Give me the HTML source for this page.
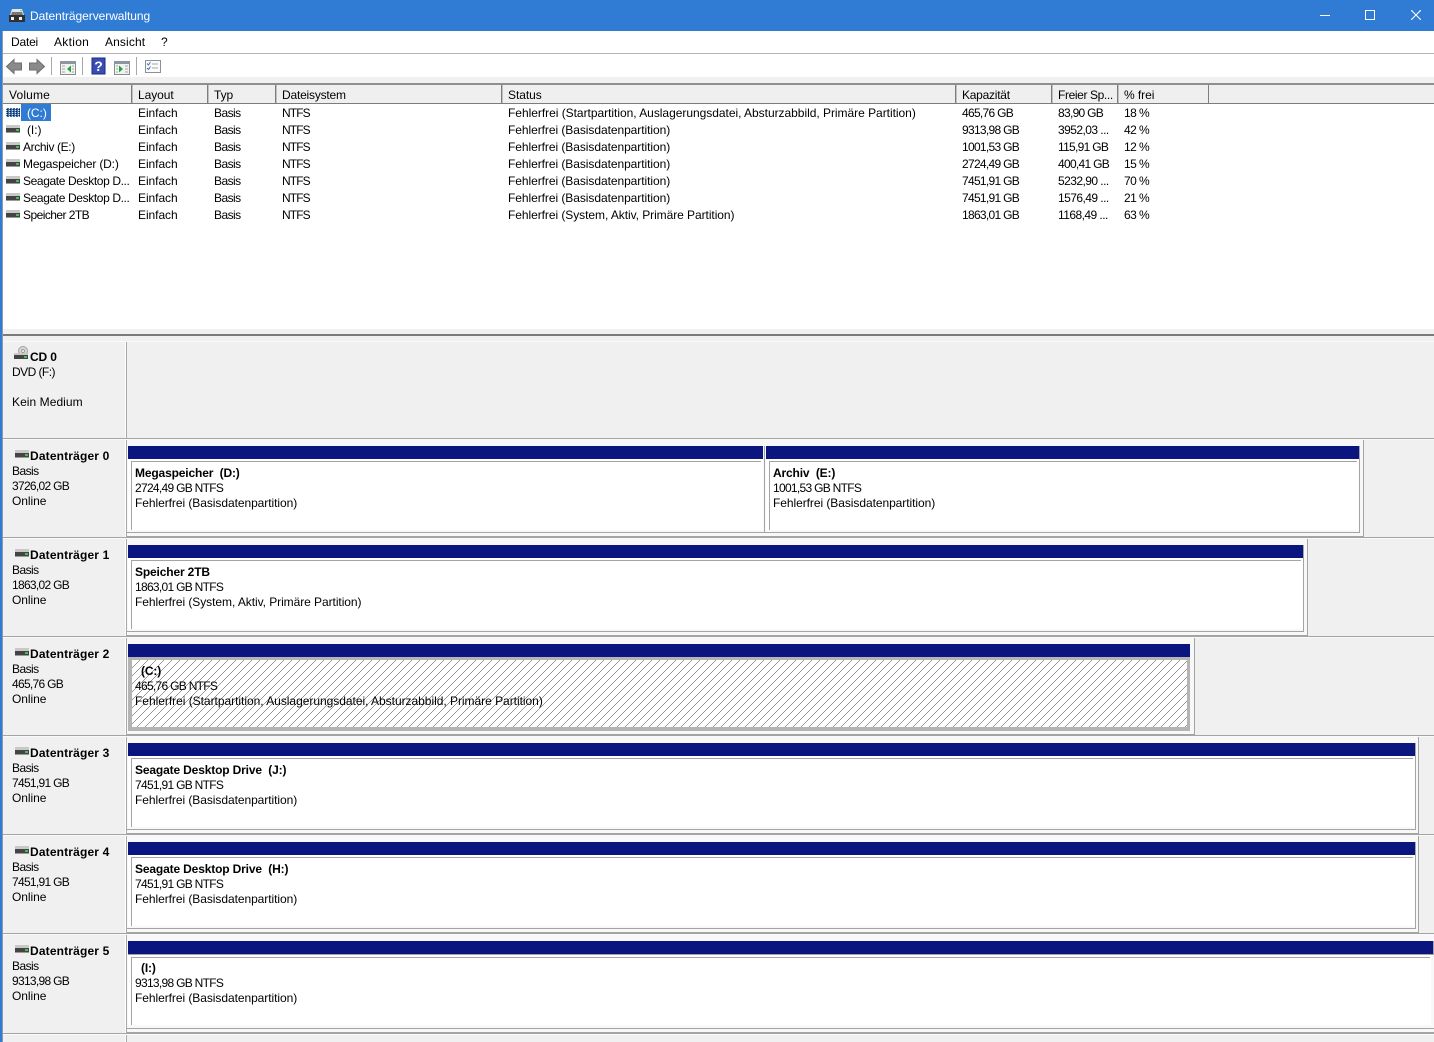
<!DOCTYPE html>
<html lang="de"><head><meta charset="utf-8"><title>Datenträgerverwaltung</title>
<style>
html,body{margin:0;padding:0;background:#f0f0f0}
#w{position:relative;width:1434px;height:1042px;overflow:hidden;background:#f0f0f0;font:12px/15px "Liberation Sans",sans-serif;color:#000}
#w div,#w span,#w svg{position:absolute}
.t,.b{white-space:nowrap;transform:translateY(1px);letter-spacing:-.06px}
.b{font-weight:bold;letter-spacing:-.15px}
.d{letter-spacing:.16px}
#w .n{letter-spacing:-.7px}
#w .s{letter-spacing:-.55px}
#w .f{letter-spacing:-.9px}
#w .v{letter-spacing:-.38px}
#w .m{letter-spacing:.3px}
</style></head><body><div id="w">
<svg width="0" height="0" style="left:0;top:0">
<defs>
<symbol id="hdd" viewBox="0 0 14 8"><rect width="14" height="3" fill="#c8c8c8"/><rect y="3" width="14" height="4" fill="#444"/><rect y="7" width="14" height="1" fill="#9a9a9a"/><rect x="10" y="4" width="3" height="2" fill="#3fc04f"/></symbol>
<pattern id="hatch" width="8" height="8" patternUnits="userSpaceOnUse"><g fill="#969696"><rect x="7" y="0" width="1" height="1"/><rect x="6" y="1" width="1" height="1"/><rect x="5" y="2" width="1" height="1"/><rect x="4" y="3" width="1" height="1"/><rect x="3" y="4" width="1" height="1"/><rect x="2" y="5" width="1" height="1"/><rect x="1" y="6" width="1" height="1"/><rect x="0" y="7" width="1" height="1"/></g></pattern>
<pattern id="bl" width="3" height="2" patternUnits="userSpaceOnUse"><rect width="3" height="2" fill="#3f6fb0"/><rect width="1" height="1" fill="#dfe8f4"/><rect x="1" y="1" width="1" height="1" fill="#123"/></pattern>
</defs></svg>

<!-- Title bar -->
<div style="left:0;top:0;width:1434px;height:31px;background:#307bd3"></div>
<svg style="left:9px;top:7px" width="16" height="16" viewBox="0 0 16 16"><path d="M3 2h10l2 6H1z" fill="#e4e4e4"/><path d="M3 5h10l1 3H2z" fill="#777"/><rect x="0" y="8" width="16" height="7" fill="#303030"/><rect x="2" y="10" width="3" height="3" fill="#eee"/><rect x="10" y="10" width="3" height="3" fill="#eee"/><rect x="11" y="3" width="2" height="1" fill="#4f4"/></svg>
<span class="t" style="left:30px;top:8px;color:#fff">Datenträgerverwaltung</span>
<div style="left:1320px;top:15px;width:10px;height:1px;background:#fff"></div>
<div style="left:1365px;top:10px;width:8px;height:8px;border:1px solid #fff"></div>
<svg style="left:1411px;top:10px" width="10" height="10" viewBox="0 0 10 10"><path d="M0 0L10 10M10 0L0 10" stroke="#fff" stroke-width="1.1"/></svg>

<!-- Menu -->
<div style="left:0;top:31px;width:1434px;height:22px;background:#fff"></div>
<div style="left:0;top:53px;width:1434px;height:1px;background:#b4b4bc"></div>
<span class="t" style="left:11px;top:34px;letter-spacing:-.2px">Datei</span>
<span class="t m" style="left:54px;top:34px">Aktion</span>
<span class="t" style="left:105px;top:34px;letter-spacing:.12px">Ansicht</span>
<span class="t" style="left:161px;top:34px">?</span>

<!-- Toolbar -->
<div style="left:0;top:54px;width:1434px;height:23px;background:#fff"></div>
<svg style="left:0;top:54px" width="170" height="23" viewBox="0 0 170 23">
<path d="M6.500 12.500L14 5.500V9H21.500V16H14V19.500Z" fill="#8a8a8a" stroke="#6e6e6e"/>
<path d="M44.500 12.500L37 5.500V9H29.500V16H37V19.500Z" fill="#8a8a8a" stroke="#6e6e6e"/>
<path d="M51.500 3V21M82.500 3V21M136.500 3V21" stroke="#a8a8a8"/>
<g><rect x="60.500" y="7.500" width="15" height="13" fill="#f2f2f2" stroke="#8c8c8c"/><rect x="60" y="7" width="16" height="3" fill="#8c96a0"/><path d="M62 12h3M62 15h3M62 18h3M72 12h2M72 15h2M72 18h2" stroke="#9aa"/><path d="M71 11.500V18.500L67 15Z" fill="#28a040"/></g>
<rect x="92" y="4" width="13" height="16" fill="#3a4db4" stroke="#1b2a80"/>
<text x="98.500" y="17" fill="#fff" font-family="Liberation Sans" font-weight="bold" font-size="14" text-anchor="middle">?</text>
<g><rect x="114.500" y="7.500" width="15" height="13" fill="#f2f2f2" stroke="#8c8c8c"/><rect x="114" y="7" width="16" height="3" fill="#8c96a0"/><path d="M116 12h2M116 15h2M116 18h2M125 12h3M125 15h3M125 18h3" stroke="#9aa"/><path d="M119 11.500V18.500L123 15Z" fill="#28a040"/></g>
<g><rect x="145.500" y="6.500" width="15" height="12" fill="#fbfbfb" stroke="#909090"/><path d="M147 9.500l1.500 1.500 2-3M147 14l1.500 1.500 2-3" stroke="#3f6fc0" fill="none"/><path d="M152 10h6M152 14h6" stroke="#9aa"/></g>
</svg>

<!-- Left window border -->
<div style="left:0;top:31px;width:2px;height:1011px;background:#307bd3;z-index:9"></div>
<div style="left:2px;top:31px;width:1px;height:1011px;background:#8c9aa8;z-index:9"></div>

<!-- List header -->
<div style="left:3px;top:83px;width:1431px;height:2px;background:#8f8f8f"></div>
<div style="left:3px;top:85px;width:1431px;height:18px;background:#efefef"></div>
<div style="left:3px;top:103px;width:1431px;height:1px;background:#7c7c7c"></div>
<div style="left:131px;top:85px;width:1px;height:18px;background:#7e7e7e"></div><div style="left:132px;top:85px;width:1px;height:18px;background:#c0c0c0"></div>
<div style="left:207px;top:85px;width:1px;height:18px;background:#7e7e7e"></div><div style="left:208px;top:85px;width:1px;height:18px;background:#c0c0c0"></div>
<div style="left:275px;top:85px;width:1px;height:18px;background:#7e7e7e"></div><div style="left:276px;top:85px;width:1px;height:18px;background:#c0c0c0"></div>
<div style="left:501px;top:85px;width:1px;height:18px;background:#7e7e7e"></div><div style="left:502px;top:85px;width:1px;height:18px;background:#c0c0c0"></div>
<div style="left:955px;top:85px;width:1px;height:18px;background:#7e7e7e"></div><div style="left:956px;top:85px;width:1px;height:18px;background:#c0c0c0"></div>
<div style="left:1051px;top:85px;width:1px;height:18px;background:#7e7e7e"></div><div style="left:1052px;top:85px;width:1px;height:18px;background:#c0c0c0"></div>
<div style="left:1117px;top:85px;width:1px;height:18px;background:#7e7e7e"></div><div style="left:1118px;top:85px;width:1px;height:18px;background:#c0c0c0"></div>
<div style="left:1208px;top:85px;width:1px;height:18px;background:#7e7e7e"></div>
<span class="t" style="left:9px;top:87px;letter-spacing:.15px">Volume</span>
<span class="t" style="left:138px;top:87px">Layout</span>
<span class="t" style="left:214px;top:87px">Typ</span>
<span class="t" style="left:282px;top:87px;letter-spacing:-.2px">Dateisystem</span>
<span class="t" style="left:508px;top:87px">Status</span>
<span class="t" style="left:962px;top:87px;letter-spacing:-.25px">Kapazität</span>
<span class="t v" style="left:1058px;top:87px">Freier Sp...</span>
<span class="t" style="left:1124px;top:87px">% frei</span>

<!-- List body -->
<div style="left:3px;top:104px;width:1431px;height:225px;background:#fff"></div>
<div style="left:21px;top:104px;width:30px;height:17px;background:#307bd3"></div>
<svg style="left:6px;top:108px" width="14" height="9" viewBox="0 0 14 9"><rect width="14" height="9" fill="url(#bl)"/></svg>
<svg style="left:6px;top:125px" width="14" height="8"><use href="#hdd"/></svg>
<svg style="left:6px;top:142px" width="14" height="8"><use href="#hdd"/></svg>
<svg style="left:6px;top:159px" width="14" height="8"><use href="#hdd"/></svg>
<svg style="left:6px;top:176px" width="14" height="8"><use href="#hdd"/></svg>
<svg style="left:6px;top:193px" width="14" height="8"><use href="#hdd"/></svg>
<svg style="left:6px;top:210px" width="14" height="8"><use href="#hdd"/></svg>

<span class="t" style="left:27px;top:105px;color:#fff">(C:)</span><span class="t" style="left:138px;top:105px">Einfach</span><span class="t s" style="left:214px;top:105px">Basis</span><span class="t f" style="left:282px;top:105px">NTFS</span><span class="t" style="left:508px;top:105px;letter-spacing:-.03px">Fehlerfrei (Startpartition, Auslagerungsdatei, Absturzabbild, Primäre Partition)</span><span class="t n" style="left:962px;top:105px">465,76 GB</span><span class="t n" style="left:1058px;top:105px">83,90 GB</span><span class="t s" style="left:1124px;top:105px">18 %</span>
<span class="t" style="left:27px;top:122px">(I:)</span><span class="t" style="left:138px;top:122px">Einfach</span><span class="t s" style="left:214px;top:122px">Basis</span><span class="t f" style="left:282px;top:122px">NTFS</span><span class="t" style="left:508px;top:122px">Fehlerfrei (Basisdatenpartition)</span><span class="t n" style="left:962px;top:122px">9313,98 GB</span><span class="t s" style="left:1058px;top:122px">3952,03 ...</span><span class="t s" style="left:1124px;top:122px">42 %</span>
<span class="t v" style="left:23px;top:139px">Archiv (E:)</span><span class="t" style="left:138px;top:139px">Einfach</span><span class="t s" style="left:214px;top:139px">Basis</span><span class="t f" style="left:282px;top:139px">NTFS</span><span class="t" style="left:508px;top:139px">Fehlerfrei (Basisdatenpartition)</span><span class="t n" style="left:962px;top:139px">1001,53 GB</span><span class="t n" style="left:1058px;top:139px">115,91 GB</span><span class="t s" style="left:1124px;top:139px">12 %</span>
<span class="t" style="left:23px;top:156px;letter-spacing:-.18px">Megaspeicher (D:)</span><span class="t" style="left:138px;top:156px">Einfach</span><span class="t s" style="left:214px;top:156px">Basis</span><span class="t f" style="left:282px;top:156px">NTFS</span><span class="t" style="left:508px;top:156px">Fehlerfrei (Basisdatenpartition)</span><span class="t n" style="left:962px;top:156px">2724,49 GB</span><span class="t n" style="left:1058px;top:156px">400,41 GB</span><span class="t s" style="left:1124px;top:156px">15 %</span>
<span class="t v" style="left:23px;top:173px">Seagate Desktop D...</span><span class="t" style="left:138px;top:173px">Einfach</span><span class="t s" style="left:214px;top:173px">Basis</span><span class="t f" style="left:282px;top:173px">NTFS</span><span class="t" style="left:508px;top:173px">Fehlerfrei (Basisdatenpartition)</span><span class="t n" style="left:962px;top:173px">7451,91 GB</span><span class="t s" style="left:1058px;top:173px">5232,90 ...</span><span class="t s" style="left:1124px;top:173px">70 %</span>
<span class="t v" style="left:23px;top:190px">Seagate Desktop D...</span><span class="t" style="left:138px;top:190px">Einfach</span><span class="t s" style="left:214px;top:190px">Basis</span><span class="t f" style="left:282px;top:190px">NTFS</span><span class="t" style="left:508px;top:190px">Fehlerfrei (Basisdatenpartition)</span><span class="t n" style="left:962px;top:190px">7451,91 GB</span><span class="t s" style="left:1058px;top:190px">1576,49 ...</span><span class="t s" style="left:1124px;top:190px">21 %</span>
<span class="t s" style="left:23px;top:207px">Speicher 2TB</span><span class="t" style="left:138px;top:207px">Einfach</span><span class="t s" style="left:214px;top:207px">Basis</span><span class="t f" style="left:282px;top:207px">NTFS</span><span class="t" style="left:508px;top:207px">Fehlerfrei (System, Aktiv, Primäre Partition)</span><span class="t n" style="left:962px;top:207px">1863,01 GB</span><span class="t s" style="left:1058px;top:207px">1168,49 ...</span><span class="t s" style="left:1124px;top:207px">63 %</span>

<!-- Splitter -->
<div style="left:3px;top:334px;width:1431px;height:2px;background:#7a7a7a"></div>
<div style="left:3px;top:341px;width:1431px;height:1px;background:#fafafa"></div>

<!-- Vertical column divider -->
<div style="left:125px;top:342px;width:1px;height:700px;background:#fff"></div>
<div style="left:126px;top:342px;width:1px;height:700px;background:#a8a8a8"></div>

<!-- Row separators -->
<div style="left:3px;top:438px;width:1431px;height:1px;background:#a4a4a4"></div><div style="left:3px;top:439px;width:1431px;height:1px;background:#fafafa"></div>
<div style="left:3px;top:537px;width:1431px;height:1px;background:#a4a4a4"></div><div style="left:3px;top:538px;width:1431px;height:1px;background:#fafafa"></div>
<div style="left:3px;top:636px;width:1431px;height:1px;background:#a4a4a4"></div><div style="left:3px;top:637px;width:1431px;height:1px;background:#fafafa"></div>
<div style="left:3px;top:735px;width:1431px;height:1px;background:#a4a4a4"></div><div style="left:3px;top:736px;width:1431px;height:1px;background:#fafafa"></div>
<div style="left:3px;top:834px;width:1431px;height:1px;background:#a4a4a4"></div><div style="left:3px;top:835px;width:1431px;height:1px;background:#fafafa"></div>
<div style="left:3px;top:933px;width:1431px;height:1px;background:#a4a4a4"></div><div style="left:3px;top:934px;width:1431px;height:1px;background:#fafafa"></div>
<div style="left:3px;top:1033px;width:1431px;height:1px;background:#a4a4a4"></div><div style="left:3px;top:1034px;width:1431px;height:1px;background:#fafafa"></div>

<!-- CD 0 -->
<svg style="left:14px;top:346px" width="15" height="14" viewBox="0 0 15 14"><circle cx="9" cy="5" r="4.500" fill="#d8d8d8" stroke="#a0a0a0"/><circle cx="9" cy="5" r="1.500" fill="#fff" stroke="#999"/><rect y="7" width="14" height="2" fill="#c8c8c8"/><rect y="9" width="14" height="4" fill="#444"/><rect x="10" y="10" width="3" height="2" fill="#3fc04f"/></svg>
<span class="b" style="left:30px;top:349px">CD 0</span>
<span class="t s" style="left:12px;top:364px">DVD (F:)</span>
<span class="t" style="left:12px;top:394px;letter-spacing:.06px">Kein Medium</span>

<!-- Disk labels -->
<svg style="left:15px;top:450px" width="14" height="8"><use href="#hdd"/></svg><span class="b d" style="left:30px;top:448px">Datenträger 0</span><span class="t s" style="left:12px;top:463px">Basis</span><span class="t n" style="left:12px;top:478px">3726,02 GB</span><span class="t" style="left:12px;top:493px">Online</span>
<svg style="left:15px;top:549px" width="14" height="8"><use href="#hdd"/></svg><span class="b d" style="left:30px;top:547px">Datenträger 1</span><span class="t s" style="left:12px;top:562px">Basis</span><span class="t n" style="left:12px;top:577px">1863,02 GB</span><span class="t" style="left:12px;top:592px">Online</span>
<svg style="left:15px;top:648px" width="14" height="8"><use href="#hdd"/></svg><span class="b d" style="left:30px;top:646px">Datenträger 2</span><span class="t s" style="left:12px;top:661px">Basis</span><span class="t n" style="left:12px;top:676px">465,76 GB</span><span class="t" style="left:12px;top:691px">Online</span>
<svg style="left:15px;top:747px" width="14" height="8"><use href="#hdd"/></svg><span class="b d" style="left:30px;top:745px">Datenträger 3</span><span class="t s" style="left:12px;top:760px">Basis</span><span class="t n" style="left:12px;top:775px">7451,91 GB</span><span class="t" style="left:12px;top:790px">Online</span>
<svg style="left:15px;top:846px" width="14" height="8"><use href="#hdd"/></svg><span class="b d" style="left:30px;top:844px">Datenträger 4</span><span class="t s" style="left:12px;top:859px">Basis</span><span class="t n" style="left:12px;top:874px">7451,91 GB</span><span class="t" style="left:12px;top:889px">Online</span>
<svg style="left:15px;top:945px" width="14" height="8"><use href="#hdd"/></svg><span class="b d" style="left:30px;top:943px">Datenträger 5</span><span class="t s" style="left:12px;top:958px">Basis</span><span class="t n" style="left:12px;top:973px">9313,98 GB</span><span class="t" style="left:12px;top:988px">Online</span>

<!-- Disk 0 -->
<div style="left:127px;top:440px;width:1236px;height:97px;background:#f8f8f8;border-right:1px solid #a4a4a4"></div>
<div style="left:127px;top:536px;width:1237px;height:1px;background:#a4a4a4"></div>
<div style="left:127px;top:532px;width:1233px;height:1px;background:#a4a4a4"></div>
<div style="left:128px;top:446px;width:635px;height:13px;background:#0a1580"></div>
<div style="left:766px;top:446px;width:593px;height:13px;background:#0a1580"></div>
<div style="left:128px;top:459px;width:635px;height:71px;background:#fff"></div>
<div style="left:766px;top:459px;width:593px;height:71px;background:#fff"></div>
<div style="left:131px;top:461px;width:630px;height:1px;background:#a4a4a4"></div>
<div style="left:131px;top:461px;width:1px;height:69px;background:#a4a4a4"></div>
<div style="left:769px;top:461px;width:588px;height:1px;background:#a4a4a4"></div>
<div style="left:769px;top:461px;width:1px;height:69px;background:#a4a4a4"></div>
<div style="left:764px;top:446px;width:1px;height:87px;background:#a4a4a4"></div>
<div style="left:1359px;top:446px;width:1px;height:87px;background:#a4a4a4"></div>
<span class="b" style="left:135px;top:465px">Megaspeicher&nbsp; (D:)</span>
<span class="t n" style="left:135px;top:480px">2724,49 GB NTFS</span>
<span class="t" style="left:135px;top:495px">Fehlerfrei (Basisdatenpartition)</span>
<span class="b" style="left:773px;top:465px">Archiv&nbsp; (E:)</span>
<span class="t n" style="left:773px;top:480px">1001,53 GB NTFS</span>
<span class="t" style="left:773px;top:495px">Fehlerfrei (Basisdatenpartition)</span>

<!-- Disk 1 -->
<div style="left:127px;top:539px;width:1180px;height:97px;background:#f8f8f8;border-right:1px solid #a4a4a4"></div>
<div style="left:127px;top:635px;width:1181px;height:1px;background:#a4a4a4"></div>
<div style="left:127px;top:631px;width:1177px;height:1px;background:#a4a4a4"></div>
<div style="left:128px;top:545px;width:1175px;height:13px;background:#0a1580"></div>
<div style="left:128px;top:558px;width:1175px;height:71px;background:#fff"></div>
<div style="left:131px;top:560px;width:1170px;height:1px;background:#a4a4a4"></div>
<div style="left:131px;top:560px;width:1px;height:69px;background:#a4a4a4"></div>
<div style="left:1303px;top:545px;width:1px;height:87px;background:#a4a4a4"></div>
<span class="b" style="left:135px;top:564px">Speicher 2TB</span>
<span class="t n" style="left:135px;top:579px">1863,01 GB NTFS</span>
<span class="t" style="left:135px;top:594px">Fehlerfrei (System, Aktiv, Primäre Partition)</span>

<!-- Disk 2 -->
<div style="left:127px;top:638px;width:1067px;height:97px;background:#f8f8f8;border-right:1px solid #a4a4a4"></div>
<div style="left:127px;top:734px;width:1068px;height:1px;background:#a4a4a4"></div>
<div style="left:128px;top:644px;width:1062px;height:13px;background:#0a1580"></div>
<div style="left:128px;top:657px;width:1062px;height:74px;background:#b4b4b4"></div>
<div style="left:132px;top:660px;width:1055px;height:67px;background:#fff"></div>
<svg style="left:132px;top:660px" width="1055" height="67"><rect width="1055" height="67" fill="url(#hatch)"/></svg>
<span class="b" style="left:141px;top:663px">(C:)</span>
<span class="t n" style="left:135px;top:678px">465,76 GB NTFS</span>
<span class="t" style="left:135px;top:693px;letter-spacing:-.03px">Fehlerfrei (Startpartition, Auslagerungsdatei, Absturzabbild, Primäre Partition)</span>

<!-- Disk 3 -->
<div style="left:127px;top:737px;width:1291px;height:97px;background:#f8f8f8;border-right:1px solid #a4a4a4"></div>
<div style="left:127px;top:833px;width:1292px;height:1px;background:#a4a4a4"></div>
<div style="left:127px;top:829px;width:1289px;height:1px;background:#a4a4a4"></div>
<div style="left:128px;top:743px;width:1287px;height:13px;background:#0a1580"></div>
<div style="left:128px;top:756px;width:1287px;height:71px;background:#fff"></div>
<div style="left:131px;top:758px;width:1282px;height:1px;background:#a4a4a4"></div>
<div style="left:131px;top:758px;width:1px;height:69px;background:#a4a4a4"></div>
<div style="left:1415px;top:743px;width:1px;height:87px;background:#a4a4a4"></div>
<span class="b" style="left:135px;top:762px">Seagate Desktop Drive&nbsp; (J:)</span>
<span class="t n" style="left:135px;top:777px">7451,91 GB NTFS</span>
<span class="t" style="left:135px;top:792px">Fehlerfrei (Basisdatenpartition)</span>

<!-- Disk 4 -->
<div style="left:127px;top:836px;width:1291px;height:97px;background:#f8f8f8;border-right:1px solid #a4a4a4"></div>
<div style="left:127px;top:932px;width:1292px;height:1px;background:#a4a4a4"></div>
<div style="left:127px;top:928px;width:1289px;height:1px;background:#a4a4a4"></div>
<div style="left:128px;top:842px;width:1287px;height:13px;background:#0a1580"></div>
<div style="left:128px;top:855px;width:1287px;height:71px;background:#fff"></div>
<div style="left:131px;top:857px;width:1282px;height:1px;background:#a4a4a4"></div>
<div style="left:131px;top:857px;width:1px;height:69px;background:#a4a4a4"></div>
<div style="left:1415px;top:842px;width:1px;height:87px;background:#a4a4a4"></div>
<span class="b" style="left:135px;top:861px">Seagate Desktop Drive&nbsp; (H:)</span>
<span class="t n" style="left:135px;top:876px">7451,91 GB NTFS</span>
<span class="t" style="left:135px;top:891px">Fehlerfrei (Basisdatenpartition)</span>

<!-- Disk 5 -->
<div style="left:127px;top:935px;width:1307px;height:98px;background:#f8f8f8"></div>
<div style="left:127px;top:1032px;width:1307px;height:1px;background:#a4a4a4"></div>
<div style="left:127px;top:1028px;width:1307px;height:1px;background:#a4a4a4"></div>
<div style="left:128px;top:941px;width:1305px;height:13px;background:#0a1580"></div>
<div style="left:128px;top:954px;width:1303px;height:71px;background:#fff"></div>
<div style="left:128px;top:954px;width:1305px;height:1px;background:#a4a4a4"></div>
<div style="left:1433px;top:941px;width:1px;height:14px;background:#a4a4a4"></div>
<div style="left:131px;top:957px;width:1299px;height:1px;background:#a4a4a4"></div>
<div style="left:131px;top:957px;width:1px;height:68px;background:#a4a4a4"></div>
<span class="b" style="left:141px;top:960px">(I:)</span>
<span class="t n" style="left:135px;top:975px">9313,98 GB NTFS</span>
<span class="t" style="left:135px;top:990px">Fehlerfrei (Basisdatenpartition)</span>
</div></body></html>
